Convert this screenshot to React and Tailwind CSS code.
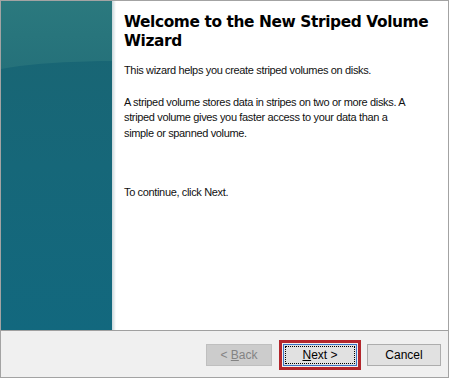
export default function App() {
  return (
    <div className="w-[449px] h-[378px] border border-[#a3a3a3] bg-white flex flex-col overflow-hidden" style={{ fontFamily: '"Liberation Sans", Arial, sans-serif' }}>
      <div className="flex flex-1 min-h-0">
        <div className="w-[111px] relative bg-[#146679] overflow-hidden">
          <svg width="111" height="330" viewBox="0 0 111 330" className="absolute inset-0">
            <defs>
              <linearGradient id="top" x1="0" y1="0" x2="0" y2="1">
                <stop offset="0" stopColor="#2b797e" />
                <stop offset="1" stopColor="#25717a" />
              </linearGradient>
              <linearGradient id="bot" x1="0" y1="0" x2="0" y2="1">
                <stop offset="0" stopColor="#1a6572" />
                <stop offset="0.5" stopColor="#166779" />
                <stop offset="1" stopColor="#12687e" />
              </linearGradient>
            </defs>
            <rect x="0" y="0" width="111" height="330" fill="url(#bot)" />
            <path d="M0 0 H111 V60 C80 60 30 62 0 68 Z" fill="url(#top)" />
          </svg>
        </div>
        <div className="w-[4px] bg-gradient-to-r from-[#c9d6da] to-white" />
        <div className="flex-1 pl-[8px] pr-[12px] pt-[12px] text-[11px] tracking-[-0.35px] text-[#111] leading-[15.5px]">
          <h1 className="text-[15.4px] leading-[19px] font-bold text-black tracking-[-0.4px]" style={{ fontFamily: '"DejaVu Sans", Verdana, sans-serif' }}>
            Welcome to the New Striped Volume Wizard
          </h1>
          <p className="mt-[12px]">This wizard helps you create striped volumes on disks.</p>
          <p className="mt-[16px] w-[292px]">A striped volume stores data in stripes on two or more disks. A striped volume gives you faster access to your data than a simple or spanned volume.</p>
          <p className="mt-[44px]">To continue, click Next.</p>
        </div>
      </div>
      <div className="h-[47px] border-t border-[#a0a0a0] bg-[#f0f0f0] flex items-center justify-end pr-[7px] pt-[2px] text-[12px]">
        <button className="w-[66px] h-[22px] border border-[#bfbfbf] bg-[#cccccc] text-[#838383]">&lt; <span className="underline">B</span>ack</button>
        <div className="ml-[7px] border-[3px] border-[#b3262c] p-[1px]">
          <button className="w-[74px] h-[22px] border border-[#3b74c4] bg-[#e1e1e1] text-black outline-1 outline-dotted outline-black -outline-offset-3"><span className="underline">N</span>ext &gt;</button>
        </div>
        <button className="ml-[6px] w-[74px] h-[22px] border border-[#adadad] bg-[#e1e1e1] text-black">Cancel</button>
      </div>
    </div>
  );
}
